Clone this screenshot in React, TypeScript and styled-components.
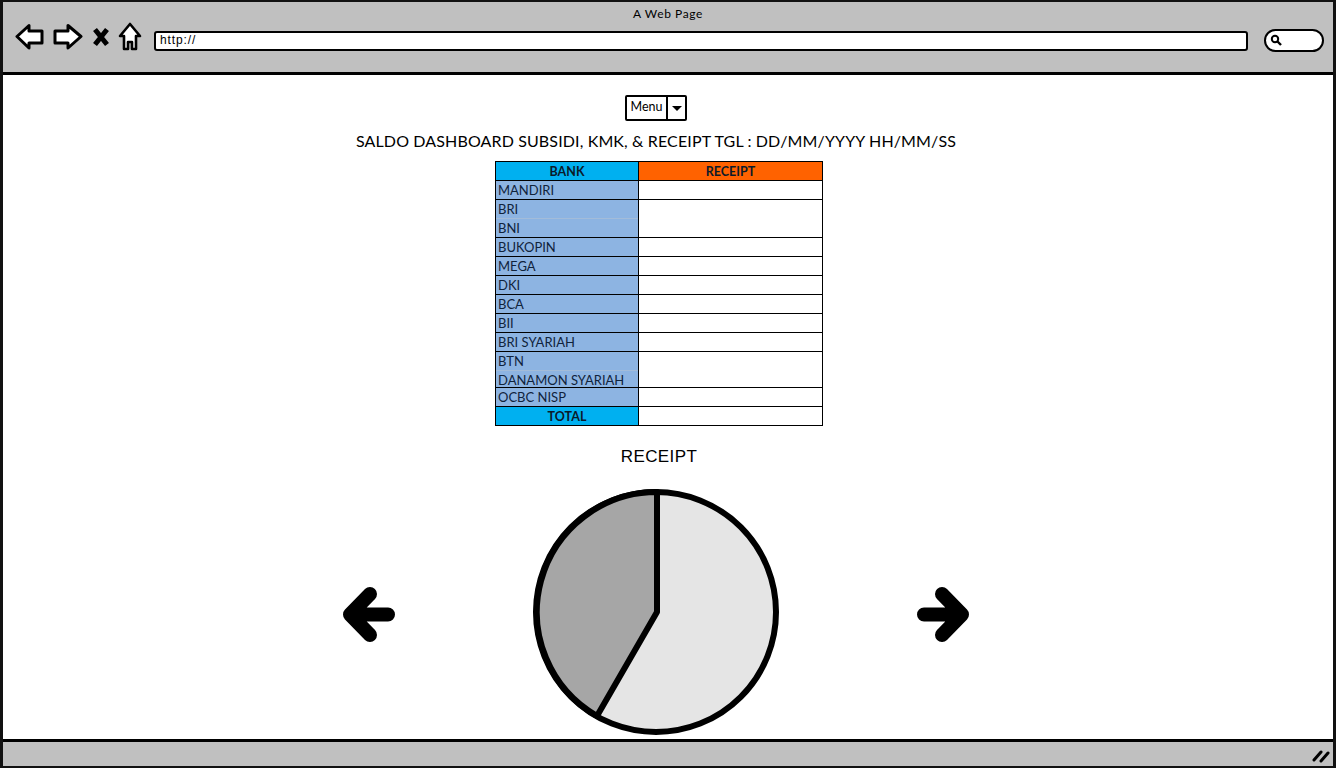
import React from 'react';
import styled, {createGlobalStyle} from 'styled-components';

const GlobalStyle = createGlobalStyle`
    html, body {
        margin: 0;
        padding: 0;
        background: #fff;
    }
`;

const Frame = styled.div`
    box-sizing: border-box;
    width: 1336px;
    height: 768px;
    display: flex;
    flex-direction: column;
    border: 3px solid #111;
    border-width: 2px 3px 2px 3px;
    overflow: hidden;
    font-family: 'Lato', sans-serif;
    color: #000;
`;

const TitleBar = styled.div`
    box-sizing: border-box;
    height: 73px;
    flex: none;
    background: #c0c0c0;
    border-bottom: 3px solid #000;
    padding-top: 5px;
`;

const PageTitle = styled.div`
    text-align: center;
    font-size: 12px;
    line-height: 14px;
    letter-spacing: 0.6px;
`;

const Toolbar = styled.div`
    display: flex;
    align-items: center;
    height: 32px;
    margin-top: 1px;
    padding-left: 12px;
`;

const NavIcon = styled.svg<{$gap: number}>`
    flex: none;
    margin-right: ${p => p.$gap}px;
    margin-bottom: 3px;
`;

const UrlBox = styled.div`
    box-sizing: border-box;
    width: 1094px;
    height: 20px;
    margin-top: 5px;
    padding-left: 4px;
    background: #fff;
    border: 2px solid #000;
    border-radius: 3px;
    font-family: 'Liberation Sans', sans-serif;
    font-size: 12px;
    line-height: 15px;
    letter-spacing: 0.9px;
`;

const SearchBox = styled.div`
    box-sizing: border-box;
    width: 60px;
    height: 23px;
    margin-left: 16px;
    margin-top: 4px;
    padding-left: 4px;
    display: flex;
    align-items: center;
    background: #fff;
    border: 2px solid #000;
    border-radius: 12px;
`;

const Content = styled.main`
    flex: 1;
    min-height: 0;
    display: flex;
    flex-direction: column;
    align-items: center;
    padding: 20px 24px 0 0;
    background: #fff;
    & > * {
        flex: none;
    }
`;

const MenuButton = styled.div`
    box-sizing: border-box;
    display: flex;
    width: 62px;
    height: 26px;
    border: 2px solid #000;
    border-radius: 2px;
    font-size: 12.5px;
`;

const MenuLabel = styled.div`
    flex: 1;
    display: flex;
    align-items: center;
    justify-content: center;
    padding-bottom: 4px;
`;

const MenuCaret = styled.div`
    width: 17px;
    display: flex;
    align-items: center;
    justify-content: center;
    border-left: 2px solid #000;
    &::after {
        content: '';
        border: 5px solid transparent;
        border-top: 5px solid #000;
        border-bottom: 0;
    }
`;

const Heading = styled.h1`
    margin: 10px 0 0;
    font-size: 16px;
    font-weight: 400;
    line-height: 20px;
    letter-spacing: 0.13px;
    white-space: nowrap;
`;

const Sheet = styled.table`
    border-collapse: collapse;
    table-layout: fixed;
    width: 327px;
    margin: 10px 0 0 6px;
    font-size: 13px;
    color: #10233c;
`;

const SheetRow = styled.tr<{$height?: number}>`
    height: ${p => p.$height ?? 19}px;
`;

const HeadCell = styled.th<{$bg: string}>`
    padding: 0;
    height: 18px;
    border: 1px solid #000;
    background: ${p => p.$bg};
    font-weight: 700;
    font-size: 12.5px;
    line-height: 17px;
    color: #0b1a2a;
`;

const BankCell = styled.td`
    padding: 0 0 0 2px;
    border: 1px solid #000;
    background: #8db4e2;
    white-space: nowrap;
    vertical-align: top;
`;

const BankLine = styled.div`
    height: 18px;
    line-height: 18px;
    & + & {
        box-sizing: border-box;
        height: 17px;
        border-top: 1px solid #a3bcd9;
        margin-left: -2px;
        padding-left: 2px;
    }
`;

const ValueCell = styled.td`
    padding: 0;
    border: 1px solid #000;
    background: #fff;
`;

const ChartTitle = styled.h2`
    margin: 21px 0 0 6px;
    font-family: 'Liberation Sans', sans-serif;
    font-size: 17px;
    font-weight: 400;
    line-height: 20px;
    letter-spacing: 0.4px;
`;

const ChartRow = styled.div`
    display: flex;
    align-items: center;
    margin-top: 22px;
    gap: 137px;
`;

const rows: {lines: string[]; height?: number}[] = [
    {lines: ['MANDIRI']},
    {lines: ['BRI', 'BNI'], height: 38},
    {lines: ['BUKOPIN']},
    {lines: ['MEGA']},
    {lines: ['DKI']},
    {lines: ['BCA']},
    {lines: ['BII']},
    {lines: ['BRI SYARIAH']},
    {lines: ['BTN', 'DANAMON SYARIAH'], height: 36},
    {lines: ['OCBC NISP']}
];

const Arrow = ({flip}: {flip?: boolean}) => (
    <svg width="54" height="60" viewBox="0 0 54 60" style={flip ? {transform: 'scaleX(-1)'} : undefined}>
        <path
            d="M28 12 L8 32.5 L28 53 M10 32.5 H46"
            fill="none"
            stroke="#000"
            strokeWidth="14"
            strokeLinecap="round"
            strokeLinejoin="round"
        />
    </svg>
);

const Pie = () => (
    <svg width="246" height="246" viewBox="0 0 246 246">
        <circle cx="123" cy="123" r="120" fill="#e5e5e5" stroke="#000" strokeWidth="6" />
        <path
            d="M124 3 V123 L64 227 A120 120 0 0 1 124 3 Z"
            fill="#a6a6a6"
            stroke="#000"
            strokeWidth="6"
            strokeLinejoin="round"
        />
    </svg>
);

const Footer = styled.footer`
    box-sizing: border-box;
    flex: none;
    height: 27px;
    display: flex;
    align-items: center;
    justify-content: flex-end;
    padding: 4px 3px 0 0;
    background: #c0c0c0;
    border-top: 3px solid #000;
`;

export default function App() {
    return (
        <>
            <GlobalStyle />
            <Frame>
                <TitleBar>
                    <PageTitle>A Web Page</PageTitle>
                    <Toolbar>
                        <NavIcon $gap={9} width="29" height="27" viewBox="0 0 29 27">
                            <path
                                d="M2 13.5 L14 2.5 V8 H27 V20 H14 V25 Z"
                                fill="#fff"
                                stroke="#000"
                                strokeWidth="3"
                                strokeLinejoin="round"
                            />
                        </NavIcon>
                        <NavIcon $gap={9} width="30" height="27" viewBox="0 0 30 27">
                            <path
                                d="M28 13.5 L15 2.5 V8 H2 V20 H15 V25 Z"
                                fill="#fff"
                                stroke="#000"
                                strokeWidth="3"
                                strokeLinejoin="round"
                            />
                        </NavIcon>
                        <NavIcon $gap={8} width="18" height="20" viewBox="0 0 18 20">
                            <path d="M3 2.5 L15 17.5 M15 2.5 L3 17.5" fill="none" stroke="#000" strokeWidth="5" />
                        </NavIcon>
                        <NavIcon $gap={12} width="24" height="29" viewBox="0 0 24 29">
                            <path
                                d="M12 2 L22 14 H18 V27 H14 V20 H10 V27 H6 V14 H2 Z"
                                fill="#fff"
                                stroke="#000"
                                strokeWidth="2.6"
                                strokeLinejoin="round"
                            />
                        </NavIcon>
                        <UrlBox>http://</UrlBox>
                        <SearchBox>
                            <svg width="12" height="12" viewBox="0 0 12 12">
                                <circle cx="5" cy="5" r="3.2" fill="none" stroke="#000" strokeWidth="2" />
                                <path d="M7.5 7.5 L11 11" stroke="#000" strokeWidth="2.4" />
                            </svg>
                        </SearchBox>
                    </Toolbar>
                </TitleBar>
                <Content>
                    <MenuButton>
                        <MenuLabel>Menu</MenuLabel>
                        <MenuCaret />
                    </MenuButton>
                    <Heading>SALDO DASHBOARD SUBSIDI, KMK, &amp; RECEIPT TGL : DD/MM/YYYY HH/MM/SS</Heading>
                    <Sheet>
                        <colgroup>
                            <col style={{width: 143}} />
                            <col style={{width: 184}} />
                        </colgroup>
                        <thead>
                            <SheetRow>
                                <HeadCell $bg="#00b0f0">BANK</HeadCell>
                                <HeadCell $bg="#ff6200">RECEIPT</HeadCell>
                            </SheetRow>
                        </thead>
                        <tbody>
                            {rows.map(row => (
                                <SheetRow key={row.lines[0]} $height={row.height}>
                                    <BankCell>
                                        {row.lines.map(line => (
                                            <BankLine key={line}>{line}</BankLine>
                                        ))}
                                    </BankCell>
                                    <ValueCell />
                                </SheetRow>
                            ))}
                            <SheetRow>
                                <HeadCell $bg="#00b0f0">TOTAL</HeadCell>
                                <ValueCell />
                            </SheetRow>
                        </tbody>
                    </Sheet>
                    <ChartTitle>RECEIPT</ChartTitle>
                    <ChartRow>
                        <Arrow />
                        <Pie />
                        <Arrow flip />
                    </ChartRow>
                </Content>
                <Footer>
                    <svg width="18" height="14" viewBox="0 0 18 14">
                        <path d="M2 11 L9 3 M9 12 L16 4" fill="none" stroke="#000" strokeWidth="3" strokeLinecap="round" />
                    </svg>
                </Footer>
            </Frame>
        </>
    );
}
